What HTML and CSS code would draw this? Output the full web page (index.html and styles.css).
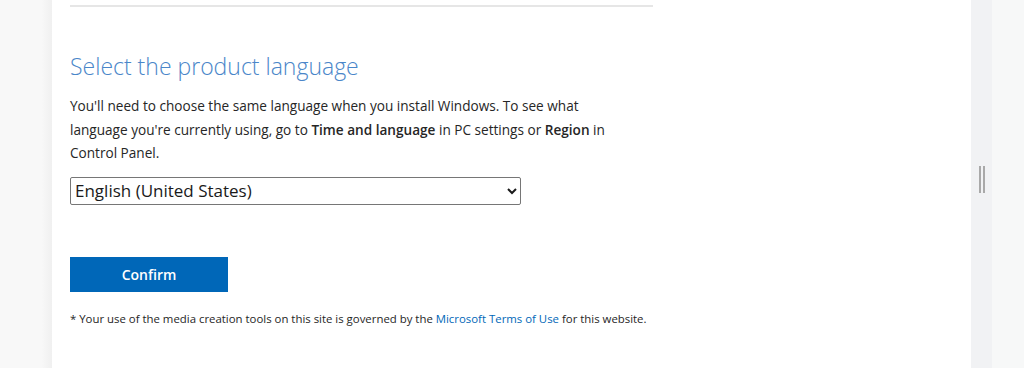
FILE: index.html
```html
<!DOCTYPE html>
<html lang="en">
<head>
    <meta charset="UTF-8">
    <meta name="viewport" content="width=device-width, initial-scale=1.0">
    <title>Download Windows</title>
    <link rel="stylesheet" href="styles.css">
</head>
<body>
    <div class="page">
        <div class="gutter"></div>
        <div class="content">
            <hr class="rule">
            <h2>Select the product language</h2>
            <p class="intro">You'll need to choose the same language when you install Windows. To see what language you're currently using, go to <b>Time and language</b> in PC settings or <b>Region</b> in Control Panel.</p>
            <select class="lang-select">
                <option>English (United States)</option>
            </select>
            <button class="confirm">Confirm</button>
            <p class="terms">* Your use of the media creation tools on this site is governed by the <a href="#">Microsoft Terms of Use</a> for this website.</p>
        </div>
        <div class="splitter"><span class="grip"></span></div>
        <div class="side"></div>
    </div>
</body>
</html>
```

FILE: styles.css
```css
* {
    margin: 0;
    padding: 0;
    box-sizing: border-box;
}

body {
    font-family: "Open Sans", "Noto Sans", sans-serif;
    color: #262626;
    background: #f7f8f8;
}

.page {
    display: flex;
    height: 368px;
    overflow: hidden;
}

.gutter {
    width: 52px;
    background: linear-gradient(to right, #f8f8f8 80%, #f0f0f0);
}

.content {
    width: 919px;
    background: white;
    padding: 0 18px;
}

.rule {
    width: 583px;
    border: none;
    border-top: 2px solid #e6e6e6;
    margin-top: 5px;
}

h2 {
    font-weight: 300;
    font-size: 23px;
    color: #4a86c9;
    margin-top: 43px;
    line-height: 32px;
}

.intro {
    width: 568px;
    font-size: 13.6px;
    line-height: 23.5px;
    margin-top: 12px;
}

.intro b {
    font-weight: 600;
}

.lang-select {
    display: block;
    width: 451px;
    height: 28px;
    margin-top: 12px;
    font-family: "Open Sans", sans-serif;
    font-size: 17px;
    color: #1a1a1a;
    border: 1px solid #767676;
    border-radius: 2px;
    background: white;
    padding-left: 0;
}

.confirm {
    display: block;
    width: 158px;
    height: 35px;
    margin-top: 52px;
    background: #0067b8;
    color: white;
    border: none;
    font-family: "Open Sans", sans-serif;
    font-size: 14px;
    font-weight: 600;
}

.terms {
    font-size: 11.4px;
    margin-top: 19px;
    color: #262626;
}

.terms a {
    color: #0067b8;
    text-decoration: none;
}

.splitter {
    width: 21px;
    background: #f1f2f4;
    display: flex;
    justify-content: center;
    padding-top: 166px;
}

.grip {
    width: 6px;
    height: 27px;
    border-left: 2px solid #a9a9a9;
    border-right: 2px solid #a9a9a9;
}

.side {
    flex: 1;
    background: #f7f8f8;
}
```
